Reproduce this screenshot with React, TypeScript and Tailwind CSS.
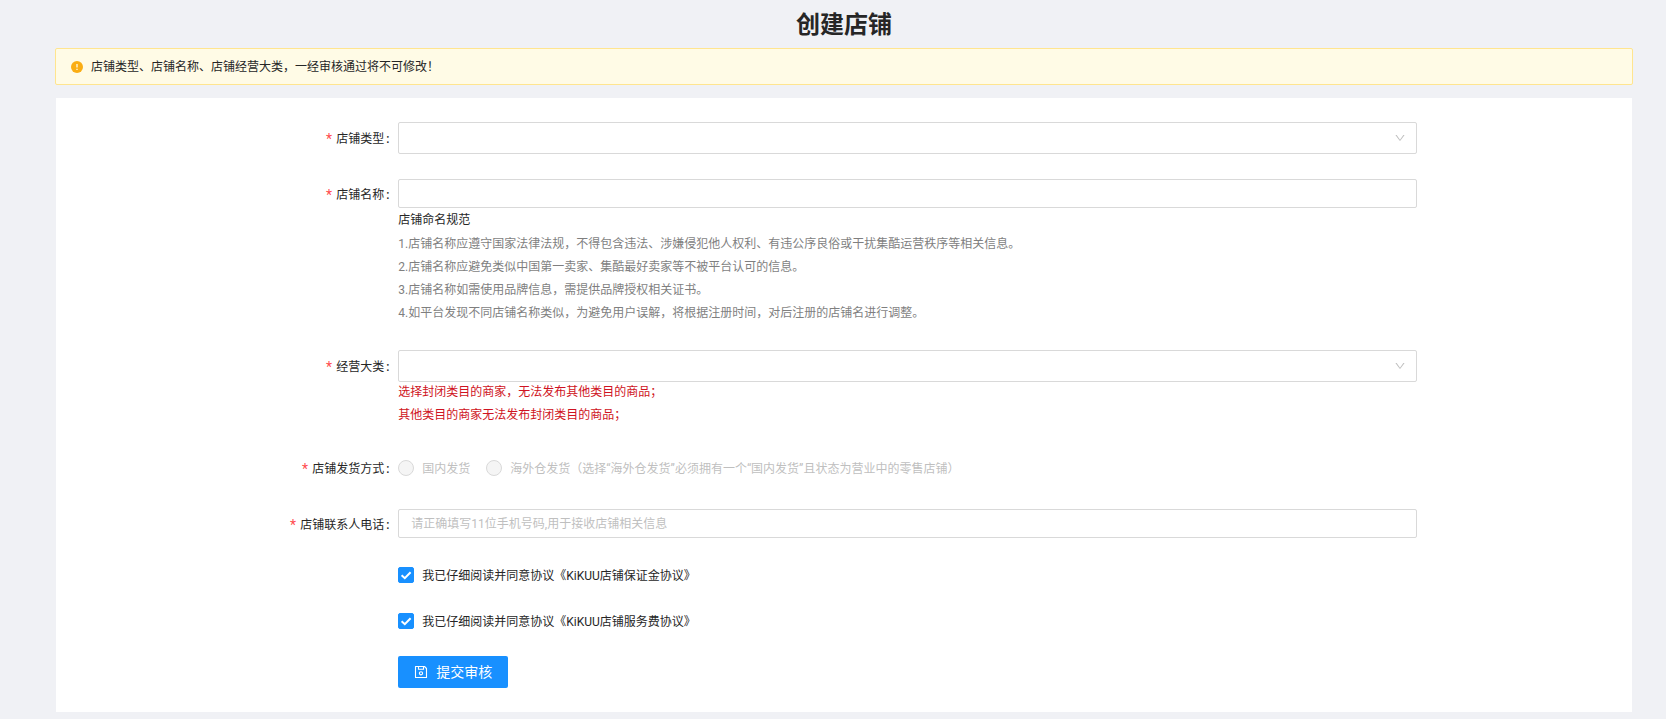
import { useState } from 'react';
import type { ReactNode } from 'react';
import { AiOutlineDown } from 'react-icons/ai';

const namingRules = [
  '1.店铺名称应遵守国家法律法规，不得包含违法、涉嫌侵犯他人权利、有违公序良俗或干扰集酷运营秩序等相关信息。',
  '2.店铺名称应避免类似中国第一卖家、集酷最好卖家等不被平台认可的信息。',
  '3.店铺名称如需使用品牌信息，需提供品牌授权相关证书。',
  '4.如平台发现不同店铺名称类似，为避免用户误解，将根据注册时间，对后注册的店铺名进行调整。',
];

const shippingOptions = [
  { value: 'domestic', label: '国内发货' },
  { value: 'overseas', label: '海外仓发货（选择“海外仓发货”必须拥有一个“国内发货”且状态为营业中的零售店铺）' },
];

const agreements = [
  { id: 'deposit', label: '我已仔细阅读并同意协议《KiKUU店铺保证金协议》' },
  { id: 'service', label: '我已仔细阅读并同意协议《KiKUU店铺服务费协议》' },
];

interface FormRowProps {
  label?: string;
  htmlFor?: string;
  labelId?: string;
  labelHeight?: string;
  children: ReactNode;
}

function FormRow({ label, htmlFor, labelId, labelHeight = 'h-8', children }: FormRowProps) {
  return (
    <div className="grid grid-cols-[5fr_16fr_3fr]">
      <div className={`flex items-center justify-end pt-0.5 pr-2 ${labelHeight}`}>
        {label && (
          <label htmlFor={htmlFor} id={labelId} className="flex items-center whitespace-nowrap">
            <span className="mr-1 text-sm leading-4 text-[#ff4d4f]">*</span>
            {label}
            <span className="mr-px ml-0.5 font-medium">:</span>
          </label>
        )}
      </div>
      <div className="min-w-0">{children}</div>
    </div>
  );
}

function WarningIcon() {
  return (
    <svg viewBox="0 0 12 12" className="size-3 shrink-0" aria-hidden="true">
      <circle cx="6" cy="6" r="6" fill="#faad14" />
      <path d="M6 3v3.6M6 7.8v1.2" stroke="#fffbe6" strokeWidth="1.3" />
    </svg>
  );
}

function SaveIcon() {
  return (
    <svg
      viewBox="0 0 14 14"
      className="size-3.5 shrink-0"
      fill="none"
      stroke="currentColor"
      strokeWidth="1.1"
      aria-hidden="true"
    >
      <path d="M1.5 1.5h9l2 2v9h-11z" strokeLinejoin="round" />
      <path d="M4.5 1.5v2.8h5V1.5" />
      <circle cx="7" cy="8.3" r="1.6" />
    </svg>
  );
}

function SelectField({ id }: { id: string }) {
  return (
    <div className="relative">
      <select
        id={id}
        defaultValue=""
        className="block h-8 w-full appearance-none rounded-xs border border-[#d9d9d9] bg-white px-3 outline-none focus:border-[#40a9ff]"
      >
        <option value=""></option>
      </select>
      <AiOutlineDown className="pointer-events-none absolute top-1/2 right-[11px] size-3 -translate-y-1/2 text-[#bfbfbf]" />
    </div>
  );
}

function CheckboxField({ id, label }: { id: string; label: string }) {
  const [checked, setChecked] = useState(true);

  return (
    <label htmlFor={id} className="flex h-6 w-fit items-center gap-2">
      <span className="relative size-4">
        <input
          id={id}
          type="checkbox"
          checked={checked}
          onChange={(e) => setChecked(e.target.checked)}
          className="block size-4 appearance-none rounded-xs border border-[#d9d9d9] bg-white checked:border-[#1890ff] checked:bg-[#1890ff]"
        />
        {checked && (
          <svg viewBox="0 0 16 16" className="pointer-events-none absolute inset-0 size-4">
            <path d="M3.6 8.2 6.8 11.2 12.6 5.2" fill="none" stroke="#fff" strokeWidth="2" />
          </svg>
        )}
      </span>
      <span className="pt-0.5">{label}</span>
    </label>
  );
}

export default function App() {
  return (
    <div className="min-h-screen bg-[#f0f1f5] pr-[33px] pl-[55px] font-['Roboto','Noto_Sans_CJK_SC',sans-serif] text-xs text-[#262626]">
      <h1 className="pt-0.5 text-center text-2xl leading-[46px] font-bold">创建店铺</h1>

      <div
        role="alert"
        className="flex h-[37px] items-center gap-2 rounded-xs border border-[#ffe58f] bg-[#fffbe6] px-[15px]"
      >
        <WarningIcon />
        <span>店铺类型、店铺名称、店铺经营大类，一经审核通过将不可修改！</span>
      </div>

      <form
        onSubmit={(e) => e.preventDefault()}
        className="mx-px mt-[13px] flex flex-col gap-[25px] bg-white p-6"
      >
        <FormRow label="店铺类型" htmlFor="shopType">
          <SelectField id="shopType" />
        </FormRow>

        <FormRow label="店铺名称" htmlFor="shopName" labelHeight="h-[29px]">
          <input
            id="shopName"
            type="text"
            className="block h-[29px] w-full rounded-xs border border-[#d9d9d9] px-3 outline-none focus:border-[#40a9ff]"
          />
          <p className="leading-6">店铺命名规范</p>
          <ul className="flex flex-col gap-[3px] py-0.5 leading-5 text-[#7f7f7f]">
            {namingRules.map((rule) => (
              <li key={rule}>{rule}</li>
            ))}
          </ul>
        </FormRow>

        <FormRow label="经营大类" htmlFor="category">
          <SelectField id="category" />
          <div className="flex flex-col gap-[3px] pb-0.5 leading-5 text-[#cf1322]">
            <p>选择封闭类目的商家，无法发布其他类目的商品；</p>
            <p>其他类目的商家无法发布封闭类目的商品；</p>
          </div>
        </FormRow>

        <FormRow label="店铺发货方式" labelId="shippingLabel">
          <div
            role="radiogroup"
            aria-labelledby="shippingLabel"
            className="flex h-8 items-center gap-4 text-[#bfbfbf]"
          >
            {shippingOptions.map((option) => (
              <label key={option.value} className="flex items-center gap-2">
                <input
                  type="radio"
                  name="shipping"
                  value={option.value}
                  disabled
                  className="size-4 shrink-0 appearance-none rounded-full border border-[#d9d9d9] bg-[#f5f5f5]"
                />
                <span className="pt-0.5">{option.label}</span>
              </label>
            ))}
          </div>
        </FormRow>

        <FormRow label="店铺联系人电话" htmlFor="phone" labelHeight="h-[29px]">
          <input
            id="phone"
            type="tel"
            placeholder="请正确填写11位手机号码,用于接收店铺相关信息"
            className="block h-[29px] w-full rounded-xs border border-[#d9d9d9] px-3 outline-none placeholder:text-[#bfbfbf] focus:border-[#40a9ff]"
          />
        </FormRow>

        <FormRow>
          <div className="flex flex-col gap-[22px]">
            {agreements.map((item) => (
              <CheckboxField key={item.id} id={item.id} label={item.label} />
            ))}
          </div>
          <button
            type="submit"
            className="mt-[23px] flex h-8 items-center gap-2 rounded-xs bg-[#1890ff] px-4 text-sm text-white hover:bg-[#40a9ff]"
          >
            <SaveIcon />
            提交审核
          </button>
        </FormRow>
      </form>
    </div>
  );
}
